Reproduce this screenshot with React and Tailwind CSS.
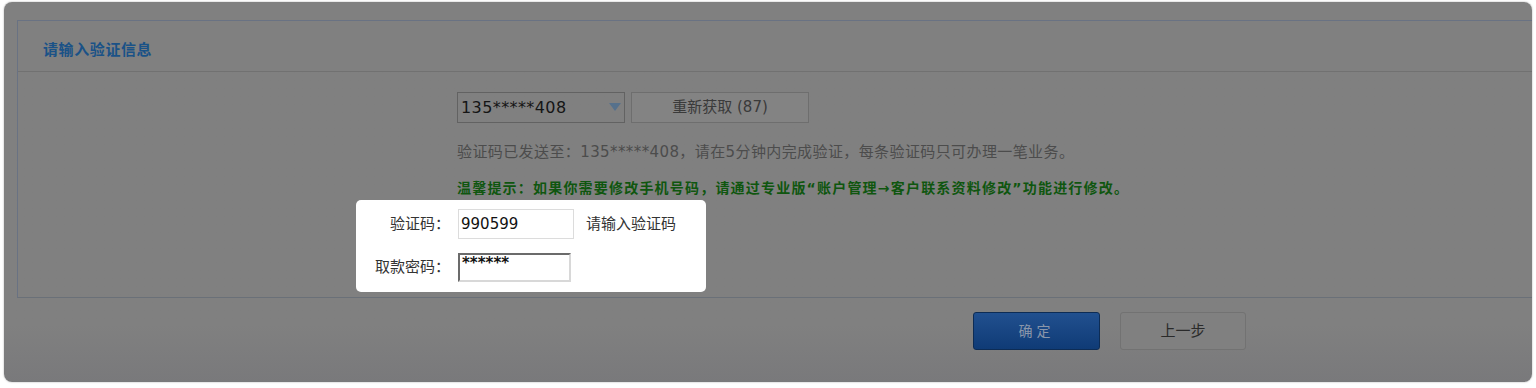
import React from "react";

const font = { fontFamily: '"DejaVu Sans", "Noto Sans CJK SC", sans-serif' };

const App = () => {
  return (
    <div className="min-h-screen bg-white pl-[4px] pt-[2px]" style={font}>
      <div className="w-[1528px] h-[380px] rounded-lg overflow-hidden bg-gradient-to-b from-[#808080] from-85% to-[#79797b] shadow-[0_0_2px_rgba(0,0,0,0.35)]">
        <div className="pt-[18px] pl-[13px] -mr-2">
          {/* panel */}
          <div className="border border-[#697283] border-b-[#6a7078]">
            <div className="h-[51px] border-b border-[#717171] pl-[25px] pt-[19px]">
              <h3 className="text-[15px] font-bold leading-[20px] tracking-[0.6px] text-[#1a5287]">请输入验证信息</h3>
            </div>

            <div className="h-[225px] pt-[20px]">
              <div className="pl-[439px]">
                <div className="flex gap-[6px]">
                  <div className="relative w-[168px] h-[31px] border border-[#626262] flex items-center pl-[3px]">
                    <span className="text-[16px] tracking-[0.4px] text-[#151515]">135*****408</span>
                    <svg className="absolute right-[3px] top-[10px]" width="12" height="8" viewBox="0 0 12 8">
                      <path d="M0 0H12L6 8Z" fill="#56718c" />
                    </svg>
                  </div>
                  <button
                    type="button"
                    className="w-[178px] h-[31px] border border-[#6e6e6e] bg-[#838383] text-[15px] text-[#3a3a3a]"
                  >
                    重新获取 (87)
                  </button>
                </div>
                <p className="mt-[19px] text-[15px] leading-[20px] tracking-[0.4px] text-[#4c4c4c]">
                  验证码已发送至：135*****408，请在5分钟内完成验证，每条验证码只可办理一笔业务。
                </p>
                <p className="mt-[16px] text-[14px] leading-[20px] tracking-[1.2px] font-bold text-[#0f560f]">
                  温馨提示：如果你需要修改手机号码，请通过专业版“账户管理→客户联系资料修改”功能进行修改。
                </p>
              </div>

              <div className="ml-[338px] mt-[2px] w-[350px] rounded-[5px] bg-white pt-[9px] pb-[10px]">
                <div className="flex items-center h-[30px]">
                  <label className="w-[94px] text-right text-[15px] text-[#333]">验证码：</label>
                  <input
                    type="text"
                    defaultValue="990599"
                    className="ml-[8px] w-[116px] h-[30px] border border-[#dcdcdc] px-[2px] text-[15px] text-[#111] outline-none"
                  />
                  <span className="ml-[12px] text-[15px] text-[#333]">请输入验证码</span>
                </div>
                <div className="mt-[14px] flex items-center h-[29px]">
                  <label className="w-[94px] text-right text-[15px] text-[#333]">取款密码：</label>
                  <div className="ml-[8px] w-[113px] h-[29px] border-2 border-t-[#6b6b6b] border-l-[#6b6b6b] border-b-[#d8d8d8] border-r-[#d8d8d8] pl-[2px] leading-[16px] text-[15px] font-bold text-[#111]">
                    ******
                  </div>
                </div>
              </div>
            </div>
          </div>
        </div>

        <div className="mt-[14px] flex justify-end gap-[20px] pr-[286px]">
          <button
            type="button"
            className="w-[127px] h-[38px] rounded-[3px] border border-[#0d2c55] bg-gradient-to-b from-[#21508f] to-[#0f3b76] text-[14px] tracking-[4px] text-[#8a96aa]"
          >
            确定
          </button>
          <button
            type="button"
            className="w-[126px] h-[38px] rounded-[3px] border border-[#727272] bg-[#808080] text-[15px] text-[#2a2a2a]"
          >
            上一步
          </button>
        </div>
      </div>
    </div>
  );
};

export default App;
